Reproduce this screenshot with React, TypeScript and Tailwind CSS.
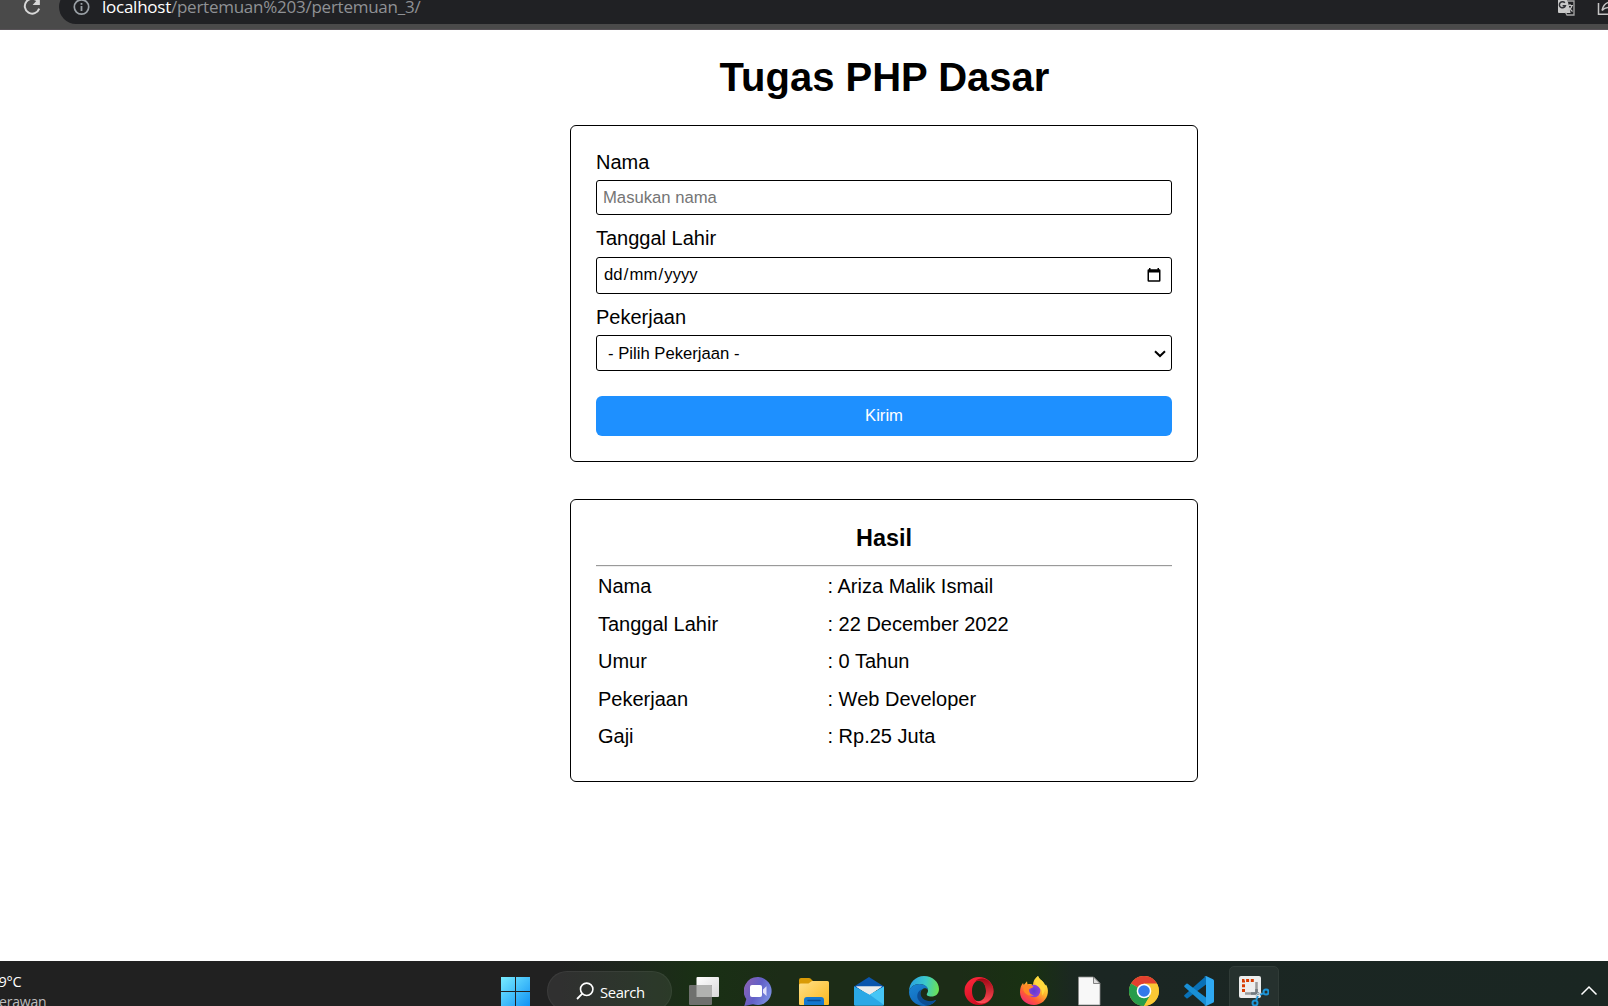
import React from 'react';

const results: [string, string][] = [
  ['Nama', ': Ariza Malik Ismail'],
  ['Tanggal Lahir', ': 22 December 2022'],
  ['Umur', ': 0 Tahun'],
  ['Pekerjaan', ': Web Developer'],
  ['Gaji', ': Rp.25 Juta'],
];

function BrowserBar() {
  return (
    <header className="flex h-[30px] shrink-0 items-start overflow-hidden border-b border-[#585358] bg-[#4a4a4a] font-['Open_Sans',sans-serif]">
      <svg className="ml-[21px] h-[20px] w-[22px] shrink-0" viewBox="0 0 22 20" fill="none">
        <path d="M17 1.6A7.4 7.4 0 1 0 18.2 8.6" stroke="#d8d8d8" strokeWidth="2" />
        <path d="M18.9 -3V5H11.6Z" fill="#d8d8d8" />
      </svg>
      <div className="-mt-[10px] ml-[16px] flex h-[34px] flex-1 items-center rounded-l-full bg-[#202124]">
        <svg className="ml-[14px] h-[18px] w-[17px] shrink-0" viewBox="0 0 17 18" fill="none">
          <circle cx="8.5" cy="9" r="7.2" stroke="#9aa0a6" strokeWidth="1.7" />
          <path d="M8.5 8v5M8.5 5v1.8" stroke="#9aa0a6" strokeWidth="1.8" />
        </svg>
        <p className="ml-[12px] w-[330px] whitespace-nowrap text-[17px] leading-[24px] tracking-[-0.25px] text-[#8f9195]">
          <span className="text-white">localhost</span>/pertemuan%203/pertemuan_3/
        </p>
        <svg className="ml-auto h-[20px] w-[50px] shrink-0" viewBox="1558 -3 50 20">
          <path d="M1558 -2h9l3.6 15h-11.6q-1 0-1-1z" fill="#c9c9c9" />
          <path d="M1568 1h6v14h-7l-1.5-2.5" fill="none" stroke="#a8a8a8" strokeWidth="1.3" />
          <path d="M1564.9 2.8a3.1 3.1 0 1 0 .5 3h-2.8" fill="none" stroke="#303136" strokeWidth="1.5" />
          <path d="M1567.5 5.5h5.5M1570 4v1.5M1572 5.5q-1 4-4.500 5.500M1568.500 7.500l4 4" fill="none" stroke="#c0c0c0" strokeWidth="1.1" />
          <path d="M1598.500 3v11.200h12M1602 10.500q1.500-7.500 8-8.500M1602 10.500q3-3.500 8-3" fill="none" stroke="#c4c4c4" strokeWidth="1.500" />
        </svg>
      </div>
    </header>
  );
}

function FormCard() {
  return (
    <form className="flex h-[337px] w-[628px] flex-col rounded-[6px] border border-black px-[25px] pt-[25px] text-[20px] leading-[23px]">
      <label>Nama</label>
      <input
        className="mt-[6px] h-[35px] shrink-0 rounded-[3px] border border-black px-[6px] text-[16.67px] outline-none placeholder:text-[#757575]"
        placeholder="Masukan nama"
      />
      <label className="mt-[12px]">Tanggal Lahir</label>
      <div className="mt-[7px] flex h-[37px] shrink-0 items-center justify-between rounded-[3px] border border-black pl-[7px] pr-[9px] text-[16.67px] leading-[20px]">
        <span className="flex pb-[2px]">dd<span className="px-[1.2px]">/</span>mm<span className="px-[1.2px]">/</span>yyyy</span>
        <svg className="mb-[1px] h-[16px] w-[16px]" viewBox="0 0 16 16">
          <path d="M3 1h1.500v1.200h7V1H13v1.200h.3q1.200 0 1.200 1.200v10.100q0 1.200-1.200 1.200H2.700q-1.200 0-1.200-1.200V3.400q0-1.200 1.200-1.200H3zM3 5.500v7.800h10V5.500z" fill="#000" />
        </svg>
      </div>
      <label className="mt-[12px]">Pekerjaan</label>
      <div className="relative mt-[6px] h-[36px] shrink-0 text-[16.67px]">
        <select className="h-full w-full appearance-none rounded-[3px] border border-black bg-white pl-[11px] pt-[2px] leading-[20px] text-black outline-none">
          <option>- Pilih Pekerjaan -</option>
        </select>
        <svg className="pointer-events-none absolute right-[6px] top-[15px] h-[8px] w-[12px]" viewBox="0 0 12 8" fill="none">
          <path d="M1 1.200l5 4.800 5-4.800" stroke="#000" strokeWidth="2" />
        </svg>
      </div>
      <button type="button" className="mt-[25px] h-[40px] shrink-0 rounded-[6px] bg-[#1e90ff] pb-[1px] text-[16.67px] text-white">
        Kirim
      </button>
    </form>
  );
}

function ResultCard() {
  return (
    <section className="mt-[37px] h-[283px] w-[628px] rounded-[6px] border border-black px-[25px] pt-[25px]">
      <h3 className="text-center text-[23.4px] font-bold leading-[26px]">Hasil</h3>
      <hr className="mt-[14px] h-[2px] border-b border-t border-b-[#eeeeee] border-t-[#9a9a9a]" />
      <dl className="pt-[1px] text-[20px] leading-[37.5px]">
        {results.map(([k, v]) => (
          <div key={k} className="flex pl-[2px]">
            <dt className="w-[229.500px]">{k}</dt>
            <dd>{v}</dd>
          </div>
        ))}
      </dl>
    </section>
  );
}

const ic = 'h-[30px] w-[30px] shrink-0';

function TaskIcons() {
  return (
    <div className="ml-[17px] mt-[15px] flex gap-[25px]">
      <svg className={ic} viewBox="0 0 30 30">
        <defs>
          <linearGradient id="tv" x2="1" y2="1"><stop stopColor="#fff" /><stop offset="1" stopColor="#d9d9d9" /></linearGradient>
        </defs>
        <rect x="7.500" y="1" width="22.500" height="20" rx="1" fill="url(#tv)" />
        <rect x="0" y="9" width="23" height="20" rx="1" fill="#6f706e" />
        <path d="M7.500 9H22q1 0 1 1v11H7.500z" fill="#b1b2b0" />
      </svg>
      <svg className={ic} viewBox="0 0 30 30">
        <defs>
          <linearGradient id="ch" x1="0" y1="0.200" x2="1" y2="0.700"><stop stopColor="#8a62b4" /><stop offset="0.500" stopColor="#6260c8" /><stop offset="1" stopColor="#7d92e4" /></linearGradient>
        </defs>
        <path d="M14.500 1a14 14 0 1 1-5.500 27.200L0.300 30l2-7A14 14 0 0 1 14.500 1z" fill="url(#ch)" />
        <rect x="6" y="9" width="12" height="12" rx="2" fill="#fff" />
        <path d="M19 13.500l3.500-3.200V20L19 16.800z" fill="#e3e2fb" />
      </svg>
      <svg className={ic} viewBox="0 0 30 30">
        <defs>
          <linearGradient id="fo" x2="1" y2="1"><stop stopColor="#ffe08a" /><stop offset="1" stopColor="#fbb81c" /></linearGradient>
        </defs>
        <path d="M0 4q0-2 2-2h8q1 0 1.500.6L14 5v6H0z" fill="#d99a06" />
        <path d="M0 9q0-1.500 1.500-1.500h8L13 5h15.500Q30 5 30 6.500V28q0 1-1 1H1q-1 0-1-1z" fill="url(#fo)" />
        <path d="M5 29v-5q0-3 3-3h14q3 0 3 3v5z" fill="#1377cf" />
        <path d="M9 24.500h12" stroke="#0a4c91" strokeWidth="1.500" strokeLinecap="round" />
      </svg>
      <svg className={ic} viewBox="0 0 30 30">
        <path d="M0 10.500L15 1l15 9.500V14H0z" fill="#0a55ad" />
        <path d="M2 10.500h26L15 19.500z" fill="#ececec" />
        <path d="M30 10.500V28q0 1.500-1.500 1.500H1.500Q0 29.500 0 28V10.500l15 9z" fill="#28abe9" />
        <path d="M0 10.500L15.500 18.500 30 29.500H1.500Q0 29.500 0 28z" fill="#2aa8e6" />
        <path d="M30 10.500L15.500 18.500 30 29z" fill="#45c6f6" />
        <path d="M2 10.500h26L15.500 18.500z" fill="#ececec" />
      </svg>
      <svg className={ic} viewBox="0 0 30 30">
        <defs>
          <linearGradient id="e1" x1="0" y1="0.300" x2="1" y2="0.400"><stop stopColor="#299fe4" /><stop offset="0.550" stopColor="#3bc9cb" /><stop offset="1" stopColor="#6be255" /></linearGradient>
          <linearGradient id="e2" x2="0.700" y2="1"><stop stopColor="#1a86d4" /><stop offset="1" stopColor="#1163b7" /></linearGradient>
        </defs>
        <path d="M15 0C23.500 0 30 6 30 13c0 5-3.500 7.500-7.500 7.500-3.500 0-5.500-1.200-4.500-3 .8-1 1-2 1-3C19 11 15.500 8 10.500 8 5.500 8 1 11 0 15.500 0 7 6.500 0 15 0z" fill="url(#e1)" />
        <path d="M0 16C.5 11 5.500 8 10.500 8c5 0 8.500 3 8.500 6-1-2-3-2-4.500-1.500-3 1.500-4 5-2.500 8.500 2 4.500 8.500 6 15 3.300C24.500 28 20 30 15 30 6.500 30 0 23.500 0 16z" fill="url(#e2)" />
        <path d="M13 13c-4.500 2-6 7-3.500 11 2.500 4 7 5.500 11 4.800 3-.8 5.500-3 6.800-5-6 2.500-12.300 1.500-14.800-3-1.700-3-1.500-6 .5-7.800z" fill="#0c4d94" />
      </svg>
      <svg className={ic} viewBox="0 0 30 30">
        <defs>
          <linearGradient id="op" x1="0" y1="0" x2="0.500" y2="1"><stop stopColor="#ff2a3d" /><stop offset="1" stopColor="#ce0c20" /></linearGradient>
          <linearGradient id="oq" x2="0" y2="1"><stop stopColor="#a00714" /><stop offset="1" stopColor="#ff5058" /></linearGradient>
        </defs>
        <path fillRule="evenodd" d="M15 1a14.500 14 0 1 0 0 28 14.500 14 0 1 0 0-28zM15 4.500c4 0 7 4.500 7 10.500s-3 10.500-7 10.500S8 21 8 15 11 4.500 15 4.500z" fill="url(#op)" />
        <path d="M11 5.500C14 2 19 1.500 24 4.500c7.300 6 7.300 15.500 0 21-4.500 3-10 2.500-13-1 6 2.500 11-2 11-9.500S17 3 11 5.500z" fill="url(#oq)" />
      </svg>
      <svg className={ic} viewBox="0 0 30 30">
        <defs>
          <linearGradient id="ff" x1="0.800" y1="0.100" x2="0.200" y2="1"><stop stopColor="#fff04a" /><stop offset="0.400" stopColor="#ffb02d" /><stop offset="0.700" stopColor="#ff5a36" /><stop offset="1" stopColor="#ef247c" /></linearGradient>
          <radialGradient id="fp"><stop stopColor="#5b3bd1" /><stop offset="1" stopColor="#8e42d6" /></radialGradient>
        </defs>
        <path d="M19 0c1 3 3.500 4 5.500 6.500 1 1 1.500 2 1.500 3l1-1c1.500 3 2.200 5 1.800 8.500C28 24 22 29 15 29 7 29 1 23.500 1 16c0-4 1.200-7 3-9l.8 2L8 5.200l.5 3.300c2-.7 4-.5 5.500.5 0-4 2-7 5-9z" fill="url(#ff)" />
        <circle cx="15" cy="15" r="6.300" fill="url(#fp)" />
        <path d="M4.500 9c3-1 7-1 10 1.500-1.500 2-4.500 2-4.500 3.500 0 3 2 5 5 5.500-5 1-9-1-10.500-5z" fill="#ff8a25" />
        <path d="M19 0c1 3 3.500 4 5.500 6.500 2.500 4 2 9-1.500 13 .5-5-1-7.500-4.500-9.500S16 3 19 0z" fill="#ffd93c" />
      </svg>
      <svg className={ic} viewBox="0 0 30 30">
        <path d="M4.500 1h15l6.500 6.500V29H4.500z" fill="#f8f8f8" stroke="#8c8c8c" strokeWidth="0.800" />
        <path d="M19.500 1v6.500H26z" fill="#dedede" stroke="#777" strokeWidth="0.900" />
      </svg>
      <svg className={ic} viewBox="0 0 30 30">
        <circle cx="15" cy="15" r="15" fill="#fcc934" />
        <path d="M15 15L2 7.500A15 15 0 0 1 28 7.500H15z" fill="#e2402f" />
        <path d="M2 7.500A15 15 0 0 0 15 30l6.500-11.200L15 15z" fill="#269c4b" />
        <path d="M15 8h13.200A15 15 0 0 1 15 30l6.500-11z" fill="#fcc934" />
        <circle cx="15" cy="15" r="7.300" fill="#fff" />
        <circle cx="15" cy="15" r="5.800" fill="#3379ea" />
      </svg>
      <svg className={ic} viewBox="0 0 30 30">
        <path d="M22 0v8.500L3.700 22.300q-.7.500-1.300 0L.5 20.500q-.7-.8 0-1.500z" fill="#0971b7" />
        <path d="M22 30v-8.500L3.700 7.700q-.7-.5-1.300 0L.5 9.500q-.7.8 0 1.500z" fill="#198fd5" />
        <path d="M22 0l7 3.200q1 .5 1 1.500v20.600q0 1-1 1.500L22 30q-1 .3-2-.7 2 1 2-1V1.700q0-2-2-1 1-1 2-.7z" fill="#2fa9f2" />
      </svg>
      <div className="-ml-[10px] -mt-[10px] h-[50px] w-[50px] shrink-0 rounded-[5px] border border-[#303b37] bg-[#26312e] pl-[9px] pt-[9px]">
        <svg className={ic} viewBox="0 0 30 30">
          <rect width="22" height="22" rx="2" fill="#ededed" />
          <path d="M4.500 16V4.500H16" fill="none" stroke="#d83b01" strokeWidth="3" strokeDasharray="3 1.700" />
          <path d="M17.500 6v11.500H6" fill="none" stroke="#9b9b9b" strokeWidth="2.500" />
          <path d="M17.500 13v6M12 17.500h8" stroke="#747b80" strokeWidth="2.500" />
          <path d="M17.500 18v5M18 17.500h5" stroke="#b8c4ca" strokeWidth="1.500" />
          <circle cx="27" cy="16" r="2.500" fill="none" stroke="#1d95d9" strokeWidth="2" />
          <circle cx="16" cy="27" r="2.500" fill="none" stroke="#1d95d9" strokeWidth="2" />
          <path d="M25 17l-4 2M17 25l2-5" stroke="#1d95d9" strokeWidth="1.800" />
        </svg>
      </div>
    </div>
  );
}

function Taskbar() {
  return (
    <footer className="flex h-[45px] shrink-0 items-start overflow-hidden bg-[linear-gradient(90deg,#212121_0px,#212121_560px,#1e271d_630px,#193014_700px,#1c2c17_780px,#1c2c17_960px,#193112_1030px,#1b2820_1070px,#1b2623_1100px,#1a2622_1608px)] font-['Open_Sans',sans-serif] text-white">
      <div className="w-[501px] shrink-0">
        <p className="-ml-[1.500px] mt-[11px] text-[14.500px] leading-[20px] tracking-[-0.3px]">9°C</p>
        <p className="-ml-[1px] text-[14px] leading-[20px] tracking-[-0.2px] text-[#bdbdbd]">erawan</p>
      </div>
      <svg className="mt-[16px] h-[29px] w-[29px] shrink-0" viewBox="0 0 29 29">
        <defs>
          <linearGradient id="win" gradientUnits="userSpaceOnUse" x1="0" y1="0" x2="29" y2="29"><stop stopColor="#79ecff" /><stop offset="1" stopColor="#0f92f5" /></linearGradient>
        </defs>
        <path d="M0 0h14v14H0zM15 0h14v14H15zM0 15h14v14H0zM15 15h14v14H15z" fill="url(#win)" />
      </svg>
      <div className="ml-[17px] mt-[10px] flex h-[40px] w-[125px] shrink-0 items-center rounded-full border border-white/5 bg-white/[0.07]">
        <svg className="ml-[28px] h-[18px] w-[18px]" viewBox="0 0 18 18" fill="none">
          <circle cx="10.700" cy="7.300" r="6.200" stroke="#fff" strokeWidth="1.600" />
          <path d="M6.300 11.700L1 17" stroke="#fff" strokeWidth="1.800" />
        </svg>
        <span className="ml-[6px] pt-[2px] text-[14.800px] leading-[20px] tracking-[-0.35px]">Search</span>
      </div>
      <TaskIcons />
      <svg className="ml-auto mr-[10px] mt-[24px] h-[12px] w-[18px]" viewBox="0 0 18 12" fill="none">
        <path d="M1.500 9.500L9 2l7.500 7.500" stroke="#fff" strokeWidth="1.500" />
      </svg>
    </footer>
  );
}

export default function App() {
  return (
    <div className="flex h-[1006px] w-[1608px] flex-col overflow-hidden bg-white font-['Liberation_Sans',Arial,sans-serif] text-black">
      <BrowserBar />
      <main className="flex flex-1 flex-col items-center pl-[160px] pt-[24px]">
        <h1 className="mb-[25px] pl-[1px] text-[40px] font-bold leading-[46px]">Tugas PHP Dasar</h1>
        <FormCard />
        <ResultCard />
      </main>
      <Taskbar />
    </div>
  );
}
